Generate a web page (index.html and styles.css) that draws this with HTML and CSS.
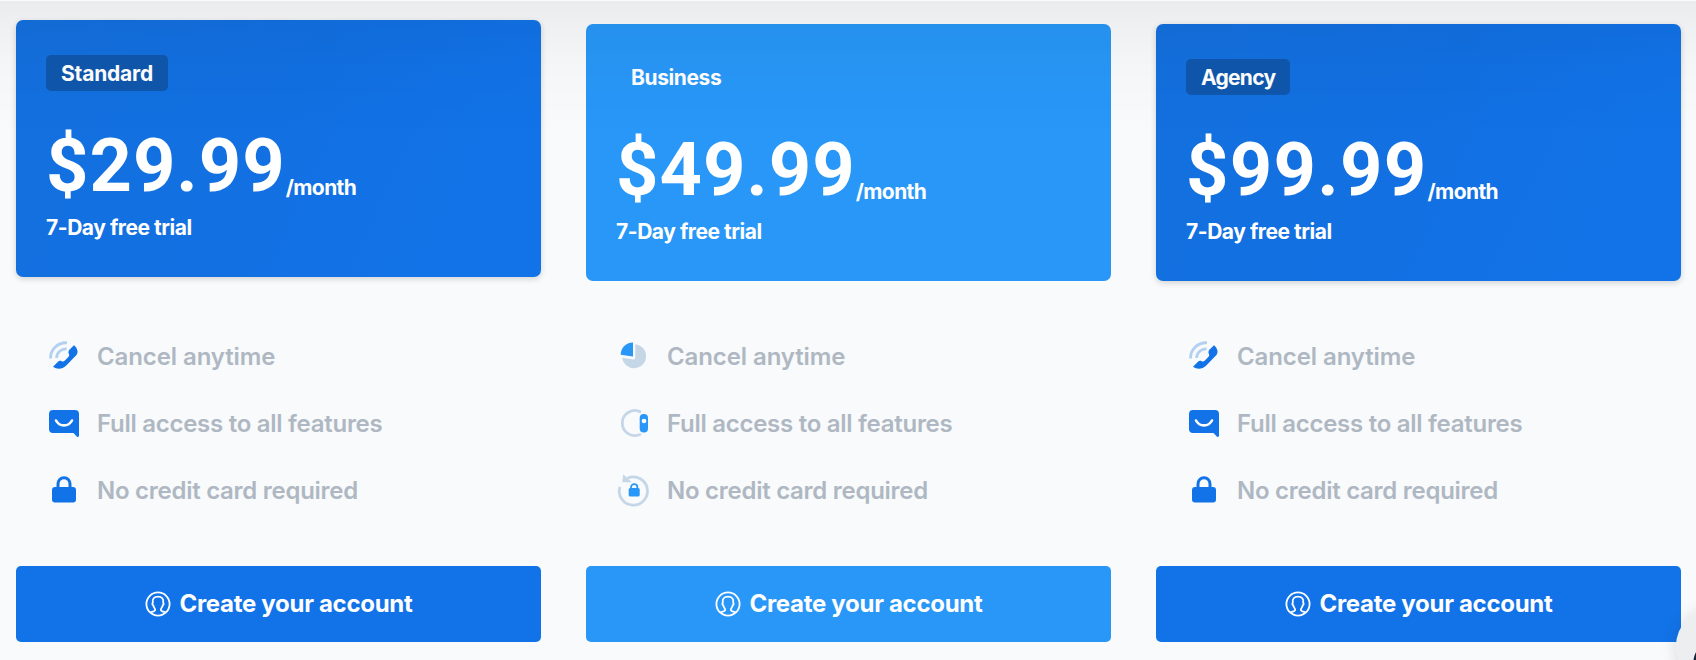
FILE: index.html
```html
<!DOCTYPE html>
<html lang="en">
<head>
    <meta charset="UTF-8">
    <meta name="viewport" content="width=device-width, initial-scale=1.0">
    <title>Pricing</title>
    <link rel="stylesheet" href="styles.css">
</head>
<body>
    <!-- shared icons -->
    <svg class="sprite" width="0" height="0">
        <symbol id="phone" viewBox="0 0 32 32">
            <path d="M2.500 18.500A15.500 15.500 0 0 1 19 2.800" fill="none" stroke="#b3d0f1" stroke-width="2.800"/>
            <path d="M8.600 18A9.500 9.500 0 0 1 18.600 8.800" fill="none" stroke="#b3d0f1" stroke-width="2.800"/>
            <path d="M26 5.200c3.800 3.200 4.600 7.500 2.200 10L18 25.700c-3.800 3.800-9.200 3.800-13 1l4.700-4.800c1.200-1.100 2.600-1.300 4-.7 1.200.6 2.200.2 3.200-.8l3.400-3.500c1-1 1.100-2 .5-3.200-.6-1.300-.4-2.900.6-4z" fill="#1273e8"/>
        </symbol>
        <symbol id="chat" viewBox="0 0 32 32">
            <path d="M5 3h22a4 4 0 0 1 4 4v21.500c0 1.500-1.200 1.900-2.200.9L25.500 26H5a4 4 0 0 1-4-4V7a4 4 0 0 1 4-4z" fill="#1273e8"/>
            <path d="M8 13.500c3.500 6.500 12.500 6.500 16 0" fill="none" stroke="#fff" stroke-width="2.600" stroke-linecap="round"/>
        </symbol>
        <symbol id="lock" viewBox="0 0 32 32">
            <path d="M10 15v-5a6 6.300 0 0 1 12 0v5" fill="none" stroke="#1273e8" stroke-width="3"/>
            <rect x="4" y="13" width="24" height="15.500" rx="3" fill="#1273e8"/>
        </symbol>
        <symbol id="pie" viewBox="0 0 32 32">
            <path d="M17.300 4.200a12 12 0 1 1-13.100 13.600l11.600 1.600q1.500.1 1.500-1.400z" fill="#c5d6e7"/>
            <path d="M15 2.500v14L2.700 14.700C2.700 8 7.500 2.700 15 2.500z" fill="#2897f7"/>
        </symbol>
        <symbol id="toggle" viewBox="0 0 32 32">
            <path d="M23 5.200a12.500 12.500 0 1 0 0 21.700" fill="none" stroke="#c5d6e7" stroke-width="2.800"/>
            <rect x="21.700" y="7" width="8.300" height="18.500" rx="4" fill="#2897f7"/>
            <circle cx="26" cy="14" r="2.300" fill="#fff"/>
        </symbol>
        <symbol id="rotate-lock" viewBox="0 0 32 32">
            <path d="M1.900 12.800A14.100 14.100 0 1 0 9.500 4.200" fill="none" stroke="#c5d6e7" stroke-width="2.800"/>
            <path d="M5.200.2l8.500 8H4.400z" fill="#c5d6e7"/>
            <path d="M13 15v-1.500a3.200 3.300 0 0 1 6.400 0V15" fill="none" stroke="#2897f7" stroke-width="1.700"/>
            <rect x="10.700" y="14" width="11" height="8.500" rx="1.500" fill="#2897f7"/>
        </symbol>
        <symbol id="user" viewBox="0 0 26 26">
            <g fill="none" stroke="#fff" stroke-width="1.800">
                <circle cx="13" cy="13" r="11.600"/>
                <path d="M5.500 21.300c2-.6 4.600-.8 4.700-2.300.1-1.600-1.600-2.500-1.900-4.700-1.100-.5-1.200-2-.5-2.600C7.200 8 9 5.600 13 5.600s5.800 2.400 5.200 6.100c.7.600.6 2.100-.5 2.600-.3 2.200-2 3.100-1.900 4.700.1 1.500 2.700 1.700 4.700 2.300"/>
            </g>
        </symbol>
    </svg>

    <main class="plans">
        <section class="plan">
            <div class="plan-head raised">
                <span class="badge">Standard</span>
                <p class="price"><span class="amount">$29.99</span><span class="period">/month</span></p>
                <p class="trial">7-Day free trial</p>
            </div>
            <ul class="features">
                <li><svg><use href="#phone"/></svg><span class="cancel">Cancel anytime</span></li>
                <li><svg><use href="#chat"/></svg><span>Full access to all features</span></li>
                <li><svg><use href="#lock"/></svg><span>No credit card required</span></li>
            </ul>
            <a class="btn" href="#"><svg><use href="#user"/></svg><span>Create your account</span></a>
        </section>

        <section class="plan business">
            <div class="plan-head">
                <span class="badge">Business</span>
                <p class="price"><span class="amount">$49.99</span><span class="period">/month</span></p>
                <p class="trial">7-Day free trial</p>
            </div>
            <ul class="features">
                <li><svg><use href="#pie"/></svg><span class="cancel">Cancel anytime</span></li>
                <li><svg><use href="#toggle"/></svg><span>Full access to all features</span></li>
                <li><svg><use href="#rotate-lock"/></svg><span>No credit card required</span></li>
            </ul>
            <a class="btn" href="#"><svg><use href="#user"/></svg><span>Create your account</span></a>
        </section>

        <section class="plan agency">
            <div class="plan-head">
                <span class="badge">Agency</span>
                <p class="price"><span class="amount">$99.99</span><span class="period">/month</span></p>
                <p class="trial">7-Day free trial</p>
            </div>
            <ul class="features">
                <li><svg><use href="#phone"/></svg><span class="cancel">Cancel anytime</span></li>
                <li><svg><use href="#chat"/></svg><span>Full access to all features</span></li>
                <li><svg><use href="#lock"/></svg><span>No credit card required</span></li>
            </ul>
            <a class="btn" href="#"><svg><use href="#user"/></svg><span>Create your account</span></a>
        </section>
    </main>

    <div class="top-shade"></div>
    <div class="chat-launcher"></div>
</body>
</html>
```
FILE: styles.css
```css
*{
    margin: 0;
    padding: 0;
    box-sizing: border-box;
}
body{
    height: 100vh;
    overflow: hidden;
    background-color: #f8fafc;
    font-family: Inter, "Open Sans", sans-serif;
    font-weight: 600;
}
.sprite{
    position: absolute;
}
.plans{
    display: grid;
    grid-template-columns: repeat(3, 525px);
    column-gap: 45px;
    padding: 24px 15px 0 16px;
}
.plan-head{
    height: 257px;
    padding: 35px 30px 0;
    border-radius: 7px;
    color: white;
    font-weight: 700;
    background: linear-gradient(115deg, #1470de, #1270e2 50%, #1273e8 85%);
    box-shadow: 0 2px 6px rgba(0, 0, 0, 0.16);
}
.raised{
    transform: translateY(-4px);
}
.badge{
    display: block;
    width: 122px;
    height: 36px;
    padding-left: 15px;
    border-radius: 5px;
    background-color: #1058ae;
    font-size: 21px;
    line-height: 37px;
    letter-spacing: -0.2px;
}
.price{
    display: flex;
    align-items: flex-end;
    height: 86px;
    margin-top: 27px;
}
.amount{
    font-family: Roboto, sans-serif;
    font-size: 74px;
    line-height: 86px;
    letter-spacing: 1px;
    margin-bottom: -5px;
}
.period{
    font-size: 21px;
    line-height: 26px;
    margin-bottom: 3px;
    letter-spacing: -0.6px;
}
.trial{
    font-size: 21px;
    line-height: 26px;
    margin-top: 11px;
    letter-spacing: -0.45px;
}
.business .plan-head{
    background: #2897f7;
    box-shadow: none;
}
.business .badge{
    background: none;
    letter-spacing: -0.4px;
}
.agency .badge{
    width: 104px;
    letter-spacing: -0.7px;
}
.agency .amount{
    letter-spacing: 1.3px;
}

.features{
    list-style-type: none;
    padding: 42px 32px 0;
}
.features li{
    display: flex;
    align-items: center;
    gap: 17px;
    height: 67px;
    color: #afb8c2;
    font-size: 24px;
    letter-spacing: -0.27px;
}
.features svg{
    width: 32px;
    height: 32px;
    flex: none;
    margin-top: -1px;
    overflow: visible;
}
.cancel{
    letter-spacing: -0.1px;
}
symbol{
    overflow: visible;
}

.btn{
    display: flex;
    align-items: center;
    justify-content: center;
    gap: 9px;
    height: 76px;
    margin-top: 42px;
    border-radius: 5px;
    background-color: #1273e8;
    color: white;
    font-size: 24px;
    font-weight: 700;
    letter-spacing: -0.3px;
    text-decoration: none;
}
.btn svg{
    width: 26px;
    height: 26px;
}
.btn span{
    margin-top: -2px;
}
.business .btn{
    background-color: #2897f7;
}

.top-shade{
    position: fixed;
    top: 1px;
    left: 0;
    width: 100%;
    height: 134px;
    background: linear-gradient(rgba(0, 0, 0, 0.055), rgba(0, 0, 0, 0.04) 18%, rgba(0, 0, 0, 0.015) 50%, transparent);
    pointer-events: none;
}
.chat-launcher{
    position: fixed;
    left: 1676px;
    top: 608px;
    width: 76px;
    height: 76px;
    border-radius: 50%;
    background: radial-gradient(circle at 38px 54px, #14233a 20px, #eceef0 21px);
    box-shadow: 0 2px 16px rgba(0, 0, 0, 0.14);
}
```
